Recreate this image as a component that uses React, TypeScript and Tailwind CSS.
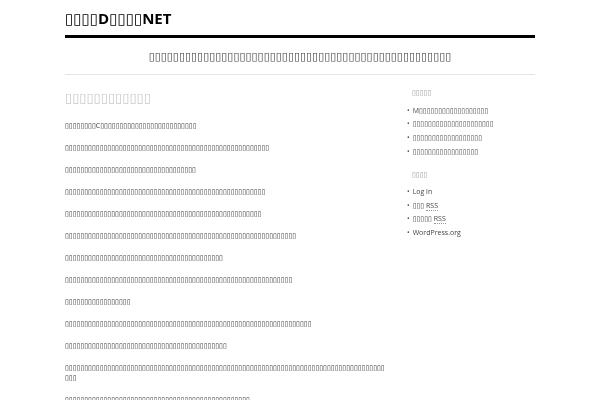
const box = (n: number) => "\u25AF".repeat(n);

const paragraphs: string[] = [
  box(8) + "C" + box(25),
  box(53),
  box(34),
  box(52),
  box(51),
  box(60),
  box(41),
  box(59),
  box(17),
  box(64),
  box(42),
  box(86),
  box(48),
];

const recent = ["M" + box(18), box(21), box(18), box(17)];

function Item({ children }: { children: React.ReactNode }) {
  return (
    <li className="flex gap-[3px] leading-[13.7px]">
      <span className="text-[#555]">•</span>
      <span>{children}</span>
    </li>
  );
}

function Sidebar() {
  return (
    <aside className="w-[128px] pt-[13px] text-[7px] text-[#444]">
      <h3 className="mb-[5px] pl-[5px] text-[7px] text-[#999]">{box(5)}</h3>
      <ul>
        {recent.map((r, i) => (
          <Item key={i}>{r}</Item>
        ))}
      </ul>
      <h3 className="mb-[4px] mt-[12px] pl-[5px] text-[7px] text-[#999]">{box(4)}</h3>
      <ul>
        <Item>Log in</Item>
        <Item>
          {box(3)} <span className="border-b border-dotted border-[#999]">RSS</span>
        </Item>
        <Item>
          {box(5)} <span className="border-b border-dotted border-[#999]">RSS</span>
        </Item>
        <Item>WordPress.org</Item>
      </ul>
    </aside>
  );
}

export default function App() {
  return (
    <div className="h-[400px] w-[600px] overflow-hidden bg-white font-['Open_Sans','DejaVu_Sans',sans-serif] antialiased [will-change:transform]">
      <div className="mx-auto w-[470px]">
        <header>
          <h1 className="pt-[8px] text-[15px] font-bold leading-[20px] text-black">
            {box(4)}D{box(4)}NET
          </h1>
          <div className="mt-[7px] h-[3px] bg-black" />
          <p className="py-[9px] text-center text-[11px] leading-[18px] text-[#444]">{box(50)}</p>
          <div className="h-px bg-[#e5e5e5]" />
        </header>
        <div className="flex justify-between">
          <main className="w-[320px] pt-[12px]">
            <h2 className="mb-[14px] text-[13px] leading-[20px] text-[#c8c8c8]">{box(12)}</h2>
            <div className="space-y-[12px] text-[7px] leading-[10px] text-[#333]">
              {paragraphs.map((p, i) => (
                <p key={i} className="break-all">{p}</p>
              ))}
            </div>
          </main>
          <Sidebar />
        </div>
      </div>
    </div>
  );
}
